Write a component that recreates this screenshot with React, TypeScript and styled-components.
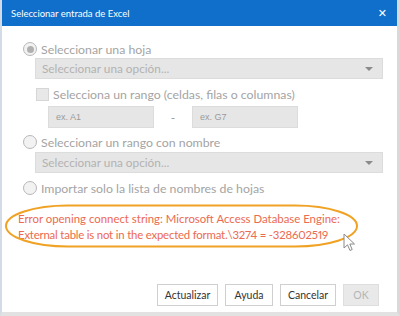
import React from "react";
import styled, { createGlobalStyle } from "styled-components";

const Global = createGlobalStyle`
  html, body { margin: 0; padding: 0; background: #fff; }
  body { font-family: "Segoe UI", Lato, "Noto Sans", sans-serif; }
`;

const Frame = styled.div`
  width: 400px;
  height: 316px;
  box-sizing: border-box;
  border-left: 2px solid #d3dbe6;
  border-right: 3px solid #d9d9d9;
  border-bottom: 4px solid #e2e2e2;
  display: flex;
  flex-direction: column;
  position: relative;
  overflow: hidden;
`;

const TitleBar = styled.div`
  height: 26px;
  background: #0f6fcb;
  color: #fff;
  display: flex;
  align-items: center;
  justify-content: space-between;
  padding: 0 10px 0 9px;
  font-size: 9.5px;
  flex: none;
`;

const Close = styled.span`
  font-size: 11px;
  font-weight: 700;
  font-family: "DejaVu Sans", sans-serif;
  line-height: 1;
`;

const Body = styled.div`
  flex: 1;
  display: flex;
  flex-direction: column;
  padding: 14px 14px 0 21px;
  position: relative;
`;

const OptionRow = styled.div<{ $top?: number }>`
  display: flex;
  align-items: center;
  gap: 4px;
  height: 18px;
  margin-top: ${(p) => p.$top ?? 0}px;
  color: #a4a4a4;
  font-size: 12.3px;
  white-space: nowrap;
`;

const Radio = styled.span<{ $checked?: boolean }>`
  width: 12px;
  height: 12px;
  border-radius: 50%;
  border: 1.5px solid #b8b8b8;
  background: #f2f2f2;
  display: flex;
  align-items: center;
  justify-content: center;
  flex: none;
  &::after {
    content: "";
    display: ${(p) => (p.$checked ? "block" : "none")};
    width: 7px;
    height: 7px;
    border-radius: 50%;
    background: #b0b0b0;
  }
`;

const Indent = styled.div<{ $top?: number }>`
  margin-left: 12px;
  margin-top: ${(p) => p.$top ?? 0}px;
  display: flex;
  flex-direction: column;
`;

const Select = styled.div`
  height: 21px;
  box-sizing: border-box;
  background: #e6e6e6;
  border: 1px solid #dcdcdc;
  display: flex;
  align-items: center;
  justify-content: space-between;
  padding: 0 9px 0 6px;
  color: #b2b2b2;
  font-size: 11.8px;
  white-space: nowrap;
`;

const Caret = styled.span`
  width: 0;
  height: 0;
  border-left: 4px solid transparent;
  border-right: 4px solid transparent;
  border-top: 4px solid #8a8a8a;
`;

const CheckRow = styled.div`
  display: flex;
  align-items: center;
  gap: 4px;
  margin: 9px 0 0 1px;
  height: 13px;
  color: #a4a4a4;
  font-size: 12.3px;
  white-space: nowrap;
`;

const Check = styled.span`
  width: 13px;
  height: 13px;
  box-sizing: border-box;
  background: #e8e8e8;
  border: 1px solid #d6d6d6;
  flex: none;
`;

const RangeRow = styled.div`
  display: flex;
  align-items: center;
  margin: 5px 0 0 13px;
`;

const RangeBox = styled.div`
  width: 106px;
  height: 22px;
  box-sizing: border-box;
  background: #e6e6e6;
  border: 1px solid #dcdcdc;
  display: flex;
  align-items: center;
  padding-left: 7px;
  color: #9a9a9a;
  font-size: 9px;
  font-family: "Liberation Sans", Arial, sans-serif;
`;

const Dash = styled.span`
  width: 38px;
  text-align: center;
  color: #999;
  font-size: 12px;
`;

const ErrorBlock = styled.div`
  margin-top: 14px;
  margin-left: -5px;
  color: #ec6a50;
  font-size: 11.4px;
  line-height: 16px;
  position: relative;
  white-space: nowrap;
  font-variant-numeric: proportional-nums;
  font-feature-settings: "pnum" 1;
`;

const Line = styled.div<{ $spacing?: number }>`
  letter-spacing: ${(p) => p.$spacing ?? 0}px;
`;

const Ellipse = styled.svg`
  position: absolute;
  left: -14px;
  top: -8px;
  pointer-events: none;
`;

const Cursor = styled.svg`
  position: absolute;
  left: 325px;
  top: 22px;
`;

const Buttons = styled.div`
  margin-top: auto;
  margin-bottom: 6px;
  display: flex;
  justify-content: flex-end;
  gap: 7px;
  padding-right: 4px;
`;

const Button = styled.button<{ $w: number; $disabled?: boolean }>`
  width: ${(p) => p.$w}px;
  height: 22px;
  box-sizing: border-box;
  background: ${(p) => (p.$disabled ? "#e9e9e9" : "#fff")};
  border: 1px solid ${(p) => (p.$disabled ? "#dedede" : "#cfcfcf")};
  color: ${(p) => (p.$disabled ? "#b5b5b5" : "#333")};
  font-family: inherit;
  font-size: 10.5px;
  padding: 0;
  border-radius: 0;
`;

export default function App() {
  return (
    <>
      <Global />
      <Frame>
        <TitleBar>
          <span>Seleccionar entrada de Excel</span>
          <Close>✕</Close>
        </TitleBar>
        <Body>
          <OptionRow>
            <Radio $checked />
            <span>Seleccionar una hoja</span>
          </OptionRow>
          <Indent>
            <Select>
              <span>Seleccionar una opción...</span>
              <Caret />
            </Select>
            <CheckRow>
              <Check />
              <span>Selecciona un rango (celdas, filas o columnas)</span>
            </CheckRow>
            <RangeRow>
              <RangeBox>ex. A1</RangeBox>
              <Dash>-</Dash>
              <RangeBox>ex. G7</RangeBox>
            </RangeRow>
          </Indent>
          <OptionRow $top={5}>
            <Radio />
            <span>Seleccionar un rango con nombre</span>
          </OptionRow>
          <Indent $top={1}>
            <Select>
              <span>Seleccionar una opción...</span>
              <Caret />
            </Select>
          </Indent>
          <OptionRow $top={6}>
            <Radio />
            <span>Importar solo la lista de nombres de hojas</span>
          </OptionRow>
          <ErrorBlock>
            <Line>Error opening connect string: Microsoft Access Database Engine:</Line>
            <Line $spacing={-0.2}>External table is not in the expected format.\3274 = -328602519</Line>
            <Ellipse width="356" height="46" viewBox="0 0 356 46">
              <rect x="2" y="2.5" width="351" height="41" rx="62" ry="20.5" fill="none" stroke="#f0a224" strokeWidth="2" />
            </Ellipse>
            <Cursor width="14" height="20" viewBox="0 0 14 20">
              <path d="M1 1 L1 15 L4.5 11.8 L7 17.5 L9.2 16.5 L6.8 11 L11.5 11 Z" fill="#fff" stroke="#8a8a8a" strokeWidth="1" strokeLinejoin="round" />
            </Cursor>
          </ErrorBlock>
          <Buttons>
            <Button $w={61}>Actualizar</Button>
            <Button $w={48}>Ayuda</Button>
            <Button $w={56}>Cancelar</Button>
            <Button $w={36} $disabled>OK</Button>
          </Buttons>
        </Body>
      </Frame>
    </>
  );
}
